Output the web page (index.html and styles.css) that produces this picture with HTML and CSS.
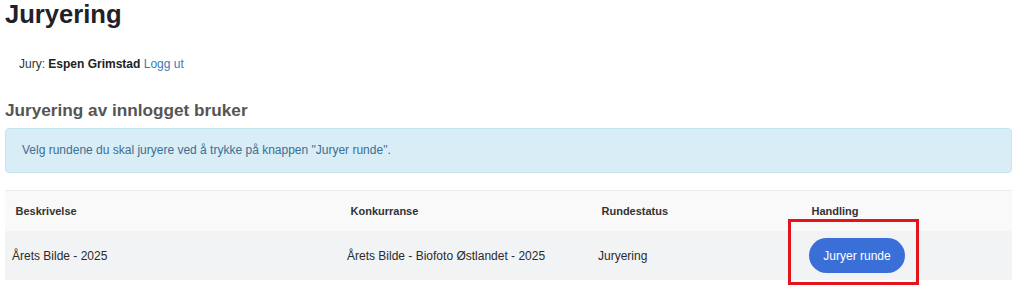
FILE: index.html
```html
<!DOCTYPE html>
<html lang="no">
<head>
<meta charset="utf-8">
<title>Juryering</title>
<link rel="stylesheet" href="styles.css">
</head>
<body>
<div class="page">
  <h1 class="title">Juryering</h1>
  <p class="user">Jury: <strong>Espen Grimstad</strong> <a class="link" href="#">Logg ut</a></p>
  <h2 class="subtitle">Juryering av innlogget bruker</h2>
  <div class="alert">Velg rundene du skal juryere ved å trykke på knappen "Juryer runde".</div>
  <div class="table">
    <div class="row head">
      <div class="cell">Beskrivelse</div>
      <div class="cell">Konkurranse</div>
      <div class="cell">Rundestatus</div>
      <div class="cell">Handling</div>
    </div>
    <div class="row body">
      <div class="cell">Årets Bilde - 2025</div>
      <div class="cell">Årets Bilde - Biofoto Østlandet - 2025</div>
      <div class="cell">Juryering</div>
      <div class="cell">
        <span class="btn-wrap">
          <button class="btn" type="button">Juryer runde</button>
          <span class="highlight"></span>
        </span>
      </div>
    </div>
  </div>
</div>
</body>
</html>
```

FILE: styles.css
```css
html, body {
  margin: 0;
  padding: 0;
  background: #ffffff;
}
body {
  min-height: 305px;
  font-family: "Liberation Sans", Arial, sans-serif;
  color: #333333;
}
.page {
  padding: 0 12px 25px 5px;
}
.title {
  margin: 0;
  font-size: 25.6px;
  line-height: 28px;
  font-weight: 700;
  color: #1f2228;
}
.user {
  margin: 28px 0 0 0;
  padding-left: 14px;
  font-size: 12px;
  line-height: 17px;
  color: #333333;
}
.user strong {
  font-weight: 700;
  color: #222222;
}
.link {
  color: #3a78b8;
  text-decoration: none;
}
.subtitle {
  margin: 27px 0 0 0;
  font-size: 17.2px;
  line-height: 20px;
  font-weight: 700;
  color: #555555;
}
.alert {
  margin-top: 8px;
  border: 1px solid #c4e6f0;
  background: #d9edf7;
  border-radius: 4px;
  padding: 13px 16px;
  font-size: 12px;
  line-height: 17px;
  color: #3a6f92;
}
.table {
  margin-top: 17px;
  font-size: 12px;
}
.row {
  display: grid;
  grid-template-columns: 335px 251px 210px 1fr;
  align-items: center;
}
.head {
  height: 40px;
  border-top: 1px solid #ececec;
  background: #f9f9f9;
  font-weight: 700;
  font-size: 11px;
  color: #333333;
}
.head .cell {
  padding-left: 10.5px;
}
.body {
  height: 49px;
  background: #f2f3f5;
  color: #2a2a2a;
}
.body .cell {
  padding-left: 7px;
}
.btn-wrap {
  position: relative;
  display: inline-block;
  margin-left: 1px;
  vertical-align: middle;
}
.btn {
  display: block;
  width: 96px;
  height: 35px;
  border: none;
  border-radius: 18px;
  background: #3b6fd8;
  color: #ffffff;
  font-family: "Liberation Sans", Arial, sans-serif;
  font-size: 12px;
  padding: 0;
  cursor: pointer;
}
.highlight {
  position: absolute;
  left: -21px;
  top: -19px;
  width: 131px;
  height: 66px;
  box-sizing: border-box;
  border: 3px solid #e3141c;
  pointer-events: none;
}
```
